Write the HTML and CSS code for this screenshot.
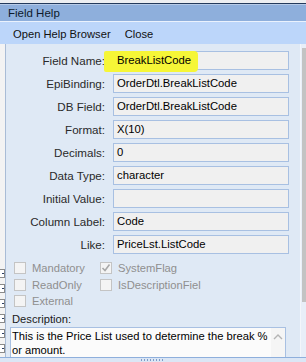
FILE: index.html
```html
<!DOCTYPE html>
<html>
  <head>
    <title>Field Help</title>
    <meta charset="utf-8" />
    <link rel="stylesheet" href="styles.css">
  </head>
  <body>
    <div class="window">
      <div class="topstrip"></div>
      <div class="titlebar">Field Help</div>
      <div class="menubar">
        <span>Open Help Browser</span>
        <span>Close</span>
      </div>

      <div class="main">
        <div class="tree">
          <span class="node"></span>
          <span class="node"></span>
          <span class="node"></span>
          <span class="node"></span>
          <span class="node"></span>
          <span class="node"></span>
        </div>

        <div class="panel">
          <div class="fields">
            <label>Field Name:</label>
            <div class="box marked"><span class="marker"></span><span class="val">BreakListCode</span></div>
            <label>EpiBinding:</label>
            <div class="box">OrderDtl.BreakListCode</div>
            <label>DB Field:</label>
            <div class="box">OrderDtl.BreakListCode</div>
            <label>Format:</label>
            <div class="box">X(10)</div>
            <label>Decimals:</label>
            <div class="box">0</div>
            <label>Data Type:</label>
            <div class="box">character</div>
            <label>Initial Value:</label>
            <div class="box"></div>
            <label>Column Label:</label>
            <div class="box">Code</div>
            <label>Like:</label>
            <div class="box">PriceLst.ListCode</div>
          </div>

          <div class="checks">
            <div class="check"><span class="cb"></span>Mandatory</div>
            <div class="check">
              <span class="cb">
                <svg width="10" height="10" viewBox="0 0 10 10">
                  <path d="M1.5 5 L4 7.5 L8.5 1.5" fill="none" stroke="#a8a8a8" stroke-width="1.6" />
                </svg>
              </span>SystemFlag
            </div>
            <div class="check"><span class="cb"></span>ReadOnly</div>
            <div class="check"><span class="cb"></span>IsDescriptionFiel</div>
            <div class="check"><span class="cb"></span>External</div>
          </div>

          <div class="desc-label">Description:</div>
          <div class="desc">
            <div class="desc-text">This is the Price List used to determine the break % or amount.</div>
            <div class="desc-scroll">
              <svg width="10" height="6" viewBox="0 0 10 6">
                <path d="M1 5 L5 1 L9 5" fill="none" stroke="#b4b4b4" stroke-width="1.4" />
              </svg>
            </div>
          </div>
        </div>

        <div class="vscroll"><div class="thumb"></div></div>
      </div>

      <div class="bottombar"><span class="grip"></span></div>
    </div>
  </body>
</html>
```

FILE: styles.css
```css
* {
  box-sizing: border-box;
}
html,
body {
  margin: 0;
  font-family: "Liberation Sans", Arial, sans-serif;
  font-size: 11.5px;
  color: #111;
}
.window {
  width: 306px;
  height: 362px;
  overflow: hidden;
  display: flex;
  flex-direction: column;
  background: #f0f0f0;
}

.topstrip {
  height: 4px;
  background: #eceef1;
  border-bottom: 1px solid #233a5c;
}
.titlebar {
  height: 17px;
  padding-left: 8px;
  line-height: 17px;
  font-size: 11.5px;
  background: #8eafdc;
  border-top: 1px solid #b7cbe8;
  color: #0d1a2c;
}
.menubar {
  height: 23px;
  display: flex;
  align-items: center;
  gap: 14px;
  padding: 1px 0 0 13px;
  font-size: 11.2px;
  background: #bcd6fa;
  border-top: 1px solid #eaf2fd;
}

.main {
  height: 313px;
  display: flex;
}
.tree {
  width: 5px;
  display: flex;
  flex-direction: column;
  gap: 6px;
  padding-top: 225px;
  overflow: hidden;
  background: #f3f3f3;
}
.node {
  display: block;
  width: 9px;
  height: 9px;
  margin-left: -4px;
  border: 1px solid #8a8a8a;
  background: #fff;
  position: relative;
}
.node::after {
  content: "";
  position: absolute;
  left: 5px;
  top: 3px;
  width: 2px;
  height: 1px;
  background: #2b3f66;
}

.panel {
  width: 296px;
  background: #dfe9f5;
  border-left: 1px solid #a9bcd6;
  border-right: 1px solid #f3f6fb;
  padding-top: 7px;
}
.fields {
  display: grid;
  grid-template-columns: 99px 176px;
  column-gap: 8px;
  row-gap: 4px;
}
.fields label {
  text-align: right;
  line-height: 19px;
  font-size: 11.6px;
  color: #2a2a2a;
}
.box {
  height: 19px;
  line-height: 17px;
  padding-left: 3px;
  border: 1px solid #a8c0e2;
  background: #f0f0f0;
  color: #000;
  font-size: 11.3px;
  white-space: nowrap;
}
.marked {
  position: relative;
}
.marker {
  position: absolute;
  left: -10px;
  top: -1px;
  width: 94px;
  height: 21px;
  border-radius: 2px 4px 4px 2px;
  background: #f6f637;
}
.val {
  position: relative;
}

.checks {
  display: grid;
  grid-template-columns: 86px 120px;
  grid-auto-rows: 16.5px;
  margin-top: 7px;
  padding-left: 8px;
}
.check {
  display: flex;
  align-items: center;
  gap: 6px;
  height: 14px;
  color: #8f8f8f;
  font-size: 11.2px;
}
.cb {
  width: 12px;
  height: 12px;
  border: 1px solid #c4c4c4;
  background: #f4f4f4;
  display: flex;
  align-items: center;
  justify-content: center;
}

.desc-label {
  margin-top: 1px;
  padding-left: 6px;
  font-size: 11.2px;
  line-height: 14px;
  color: #1a1a1a;
}
.desc {
  display: flex;
  width: 276px;
  height: 31px;
  margin: 1px 0 0 4px;
  border: 1px solid #a8c0e2;
  background: #fbfbfb;
}
.desc-text {
  flex: 1;
  padding: 1px 0 0 1px;
  line-height: 14px;
  font-size: 11.2px;
  color: #000;
}
.desc-scroll {
  width: 14px;
  display: flex;
  justify-content: center;
  padding-top: 6px;
  background: #f5f5f5;
}

.vscroll {
  width: 5px;
  background: #e8eef8;
  padding: 4px 0 0 1px;
}
.thumb {
  width: 4px;
  height: 254px;
  background: #c3c3c3;
}

.bottombar {
  height: 5px;
  border-top: 1px solid #8eafdc;
  background: #dbe6f5;
  display: flex;
  justify-content: center;
}
.grip {
  width: 24px;
  height: 2px;
  margin-top: 1px;
  background: repeating-linear-gradient(90deg, #7d9cc8 0 1px, transparent 1px 3px);
}
```
